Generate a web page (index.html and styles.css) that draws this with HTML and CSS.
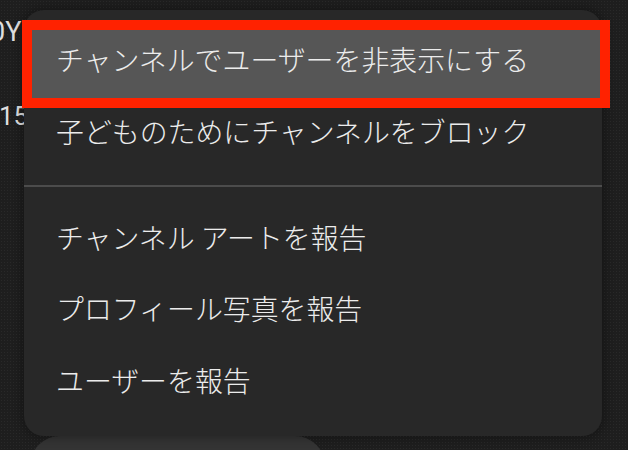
FILE: index.html
```html
<!DOCTYPE html>
<html lang="ja">
<head>
<meta charset="utf-8">
<title>Menu</title>
<link rel="stylesheet" href="styles.css">
</head>
<body>
<div class="screen">
  <div class="feed">
    <div class="feed-line feed-line-a">0Y</div>
    <div class="feed-line feed-line-b">15</div>
    <div class="pill"></div>
  </div>

  <div class="menu">
    <div class="item item-first">チャンネルでユーザーを非表示にする</div>
    <div class="item item-second">子どものためにチャンネルをブロック</div>
    <div class="divider"></div>
    <div class="item">チャンネル アートを報告</div>
    <div class="item">プロフィール写真を報告</div>
    <div class="item">ユーザーを報告</div>
  </div>

  <div class="annotation"></div>
</div>
</body>
</html>
```
FILE: styles.css
```css
html, body {
  margin: 0;
  padding: 0;
}

body {
  width: 628px;
  height: 450px;
  overflow: hidden;
  background-color: #1e1e1e;
  background-image: radial-gradient(circle, rgba(255,255,255,0.05) 0.7px, transparent 1px);
  background-size: 3px 3px;
  font-family: "Noto Sans CJK JP", "Noto Sans", sans-serif;
}

.screen {
  position: relative;
  width: 628px;
  height: 450px;
  overflow: hidden;
}

.feed {
  display: flex;
  flex-direction: column;
  padding-top: 17px;
}

.feed-line {
  font-family: Roboto, "Liberation Sans", sans-serif;
  color: #dedede;
  line-height: 30px;
  white-space: nowrap;
}

.feed-line-a {
  font-size: 27px;
  margin-left: -10px;
}

.feed-line-b {
  font-size: 26px;
  margin-top: 54px;
  margin-left: -1px;
}

.pill {
  margin-top: 305px;
  margin-left: 30px;
  width: 295px;
  height: 60px;
  border-radius: 40px;
  background: #343434;
}

.menu {
  position: absolute;
  left: 24px;
  top: 10px;
  width: 578px;
  height: 426px;
  box-sizing: border-box;
  padding-top: 14px;
  background: #282828;
  border-radius: 20px;
  box-shadow: 0 0 8px 3px rgba(0, 0, 0, 0.25);
  display: flex;
  flex-direction: column;
}

.item {
  height: 71.5px;
  display: flex;
  align-items: center;
  padding-left: 32px;
  font-size: 27.9px;
  font-weight: 300;
  line-height: 1;
  color: #ececec;
  white-space: nowrap;
}

.item-first {
  height: 71px;
  padding-bottom: 3px;
  background: #565656;
}

.item-second {
  height: 68px;
}

.divider {
  height: 2px;
  margin: 19px 0 15px;
  background: #4c4c4c;
}

.annotation {
  position: absolute;
  left: 22px;
  top: 20px;
  width: 588px;
  height: 88px;
  box-sizing: border-box;
  border: 10px solid #ff2200;
}
```
